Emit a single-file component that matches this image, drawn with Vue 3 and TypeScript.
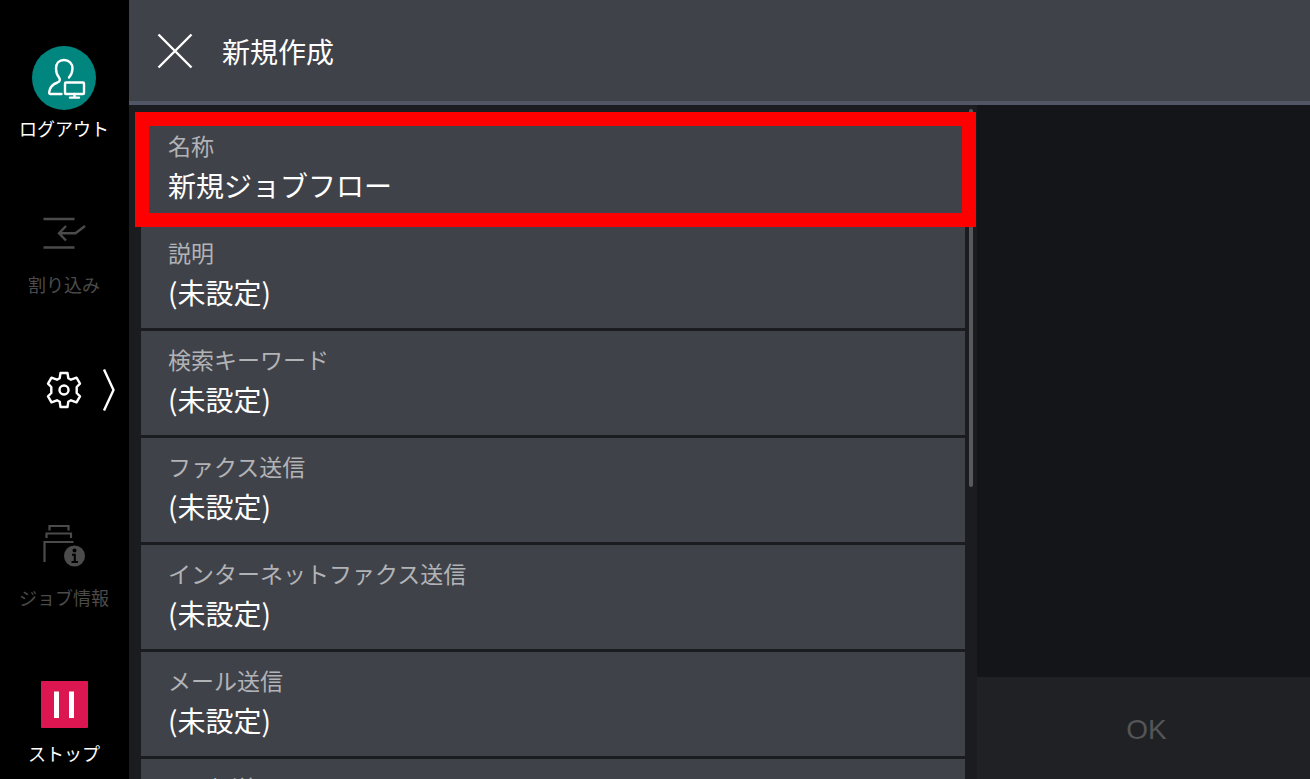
<script setup lang="ts">
interface Setting {
  label: string
  value: string
  highlighted?: boolean
}

const settings: Setting[] = [
  { label: '名称', value: '新規ジョブフロー', highlighted: true },
  { label: '説明', value: '(未設定)' },
  { label: '検索キーワード', value: '(未設定)' },
  { label: 'ファクス送信', value: '(未設定)' },
  { label: 'インターネットファクス送信', value: '(未設定)' },
  { label: 'メール送信', value: '(未設定)' },
  { label: 'FTP転送', value: '(未設定)' },
]
</script>

<template>
  <div class="panel">
    <nav class="side">
      <button class="side-btn logout" type="button">
        <svg width="64" height="64" viewBox="0 0 64 64" fill="none" stroke="#fff" stroke-width="2.4" stroke-linecap="round" stroke-linejoin="round">
          <circle cx="32" cy="32" r="32" fill="#00857f" stroke="none" />
          <path d="M29.500 48H18.500Q17 48 17.200 46C17.600 41 20 38.500 25.500 36.500C28 35.500 28.500 33.500 27 31.500C24.500 28.500 24 26 24 22.500C24 17.500 27 14 32 14C37 14 40.500 17.500 40.500 22.500C40.500 26 39.500 28.500 37 31.500" />
          <rect x="33" y="36.500" width="19" height="11.500" rx="1" />
          <path d="M42.500 48V51.500M38 51.600H47" />
        </svg>
        <span>ログアウト</span>
      </button>
      <button class="side-btn interrupt" type="button" disabled>
        <svg width="44" height="34" viewBox="0 0 44 34" fill="none" stroke="#4b4b4b" stroke-width="2.400">
          <path d="M1.500 3H32.500M1.500 31.500H32.500" />
          <path d="M24 10L17 17.300L24 24.500M17.500 17.300H33.500L43 10" />
        </svg>
        <span>割り込み</span>
      </button>
      <button class="gear" type="button" aria-label="設定">
        <svg width="36" height="38" viewBox="0 0 36 38" fill="none" stroke="#fff" stroke-width="2.400" stroke-linejoin="round">
          <path d="M14.500 2H21.500L22.300 7.200L25 8.700L30.500 6.700L34 12.700L30.700 16V22L34 25.300L30.500 31.300L25 29.300L22.300 30.800L21.500 36H14.500L13.700 30.800L11 29.300L5.500 31.300L2 25.300L5.300 22V16L2 12.700L5.500 6.700L11 8.700L13.700 7.200Z" />
          <circle cx="18" cy="19" r="4.500" />
        </svg>
        <svg width="14" height="44" viewBox="0 0 14 44" fill="none" stroke="#fff" stroke-width="2.400">
          <path d="M2 1.500L11.500 22L2 42.500" />
        </svg>
      </button>
      <button class="side-btn jobs" type="button" disabled>
        <svg width="44" height="44" viewBox="0 0 44 44" fill="none" stroke="#4b4b4b" stroke-width="2.200">
          <path d="M7.500 7.500V3H26.500V7.500M4.500 15V10.500H29V15M2.500 39V19H31.500" />
          <circle cx="32.500" cy="33" r="10.500" fill="#4b4b4b" stroke="none" />
          <circle cx="32.500" cy="27.500" r="2" fill="#000" stroke="none" />
          <path d="M30 31.800H32.800V39M29.500 39H36" stroke="#000" stroke-width="2" />
        </svg>
        <span>ジョブ情報</span>
      </button>
      <button class="side-btn stop" type="button">
        <svg width="48" height="48" viewBox="0 0 48 48">
          <rect x="1" width="47" height="47" rx="1" fill="#dc1650" />
          <path d="M14 10.500H19V37H14ZM29 10.500H34V37H29Z" fill="#fff" />
        </svg>
        <span>ストップ</span>
      </button>
    </nav>
    <div class="screen">
      <header class="bar">
        <button class="close" type="button" aria-label="閉じる">
          <svg width="36" height="36" viewBox="0 0 36 36" stroke="#fff" stroke-width="2.400" fill="none">
            <path d="M1.500 1.500L34.500 34.500M34.500 1.500L1.500 34.500" />
          </svg>
        </button>
        <h1>新規作成</h1>
      </header>
      <div class="body">
        <main class="list-wrap">
          <ul class="list">
            <li v-for="s in settings" :key="s.label" :class="{ highlighted: s.highlighted }">
              <button class="row" type="button">
                <span class="label">{{ s.label }}</span>
                <span class="value">{{ s.value }}</span>
              </button>
            </li>
          </ul>
          <div class="thumb"></div>
        </main>
        <aside class="actions">
          <button class="ok" type="button" disabled>OK</button>
        </aside>
      </div>
    </div>
  </div>
</template>

<style>
body {
  margin: 0;
  background: #000;
}
</style>

<style scoped>
.panel {
  display: flex;
  height: 100vh;
  overflow: hidden;
  font-family: "Noto Sans CJK JP", sans-serif;
  color: #fff;
  background: #000;
}
button {
  margin: 0;
  padding: 0;
  border: 0;
  background: none;
  color: inherit;
  font: inherit;
}
svg {
  display: block;
  flex: none;
}
.side {
  flex: none;
  width: 129px;
  box-sizing: border-box;
  padding: 46px 1px 0 0;
  display: flex;
  flex-direction: column;
  align-items: center;
}
.side-btn {
  display: flex;
  flex-direction: column;
  align-items: center;
  width: 100%;
  font-size: 18px;
  line-height: 24px;
  white-space: nowrap;
}
.side-btn:disabled {
  color: #4b4b4b;
}
.logout {
  gap: 6px;
}
.interrupt {
  margin-top: 76px;
  gap: 22px;
}
.gear {
  align-self: flex-end;
  display: flex;
  align-items: center;
  gap: 20px;
  margin: 72px 12px 0 0;
}
.jobs {
  margin-top: 111px;
  gap: 18px;
}
.stop {
  margin-top: 72px;
  gap: 12px;
}
.screen {
  flex: 1;
  min-width: 0;
  display: flex;
  flex-direction: column;
  background: #1b1c20;
}
.bar {
  flex: none;
  height: 105px;
  box-sizing: border-box;
  border-bottom: 4px solid #505665;
  padding: 1px 0 0 28px;
  display: flex;
  align-items: center;
  gap: 29px;
  background: #404249;
}
h1 {
  margin: 0;
  font-size: 28px;
  line-height: 40px;
  font-weight: 400;
}
.body {
  flex: 1;
  min-height: 0;
  display: grid;
  grid-template-columns: 848fr 333fr;
}
.list-wrap {
  min-width: 0;
  display: flex;
  overflow: hidden;
  padding: 4px 4px 0 6px;
}
.list {
  flex: 1;
  min-width: 0;
  margin: 0;
  padding: 8px 0 0 6px;
  list-style: none;
  display: flex;
  flex-direction: column;
  gap: 3px;
}
.row {
  display: flex;
  flex-direction: column;
  width: 100%;
  height: 104px;
  box-sizing: border-box;
  padding: 12px 27px 0;
  text-align: left;
  background: #404249;
}
li {
  position: relative;
}
.highlighted::after {
  content: "";
  position: absolute;
  z-index: 1;
  inset: -5px -11px -6px -6px;
  border: 14px solid #f00;
  pointer-events: none;
}
.label {
  font-size: 23px;
  line-height: 32px;
  color: #b2b3b6;
}
.value {
  font-size: 28px;
  line-height: 48px;
}
.thumb {
  flex: none;
  width: 4px;
  height: 378px;
  margin-left: 4px;
  border-radius: 2px;
  background: #58595c;
}
.actions {
  display: flex;
  flex-direction: column;
  justify-content: flex-end;
  background: #141518;
}
.ok {
  height: 102px;
  padding: 4px 0 0 6px;
  font-family: "Liberation Sans", sans-serif;
  font-size: 28px;
  background: #202124;
  color: #545557;
}
</style>
